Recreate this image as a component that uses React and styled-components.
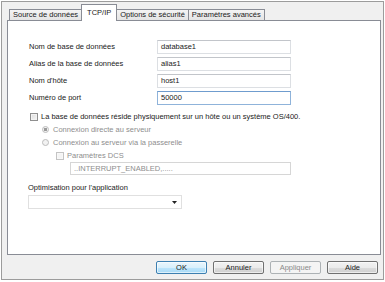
import React from 'react'
import styled, { createGlobalStyle } from 'styled-components'

const GlobalStyle = createGlobalStyle`
  html, body {
    margin: 0;
    background: #ffffff;
  }
  body {
    font-family: "Liberation Sans", Arial, sans-serif;
    font-size: 7.5px;
    color: #1a1a1a;
  }
`

const tabs = ['Source de données', 'TCP/IP', 'Options de sécurité', 'Paramètres avancés']

const fields = [
  { label: 'Nom de base de données', value: 'database1' },
  { label: 'Alias de la base de données', value: 'alias1' },
  { label: "Nom d'hôte", value: 'host1' },
  { label: 'Numéro de port', value: '50000', focused: true },
]

function App() {
  return (
    <>
      <GlobalStyle />
      <Window>
        <TabStrip>
          {tabs.map((t) => (
            <Tab key={t} $active={t === 'TCP/IP'}>{t}</Tab>
          ))}
        </TabStrip>

        <Panel>
          <FieldGrid>
            {fields.map((f) => (
              <React.Fragment key={f.label}>
                <Label>{f.label}</Label>
                <TextBox $focused={f.focused}>{f.value}</TextBox>
              </React.Fragment>
            ))}
          </FieldGrid>

          <OptionList>
            <OptionRow $indent={1}>
              <CheckBox />
              <span>La base de données réside physiquement sur un hôte ou un système OS/400.</span>
            </OptionRow>
            <OptionRow $indent={13} $disabled>
              <Radio $checked />
              <span>Connexion directe au serveur</span>
            </OptionRow>
            <OptionRow $indent={13} $disabled>
              <Radio />
              <span>Connexion au serveur via la passerelle</span>
            </OptionRow>
            <OptionRow $indent={27} $disabled>
              <CheckBox $disabled />
              <span>Paramètres DCS</span>
            </OptionRow>
            <DcsBox>..INTERRUPT_ENABLED,.....</DcsBox>
          </OptionList>

          <SectionLabel>Optimisation pour l'application</SectionLabel>
          <Select>
            <svg width="5" height="3" viewBox="0 0 5 3">
              <path d="M0 0 L5 0 L2.5 3 Z" fill="#222" />
            </svg>
          </Select>
        </Panel>

        <ButtonBar>
          <Button $variant="default">OK</Button>
          <Button>Annuler</Button>
          <Button $variant="disabled">Appliquer</Button>
          <Button>Aide</Button>
        </ButtonBar>
      </Window>
    </>
  )
}

export default App

const Window = styled.div`
  box-sizing: border-box;
  margin: 1px;
  width: 383px;
  height: 279px;
  border: 1px solid #9c9c9c;
  background: #f0f0f0;
  padding: 2px 2px 0 5px;
  display: flex;
  flex-direction: column;
`

const TabStrip = styled.div`
  display: flex;
  align-items: flex-end;
  height: 16px;
  padding-left: 2px;
`

const Tab = styled.div`
  box-sizing: border-box;
  border: 1px solid #898c95;
  border-bottom: none;
  margin-left: -1px;
  white-space: nowrap;
  color: #1a1a1a;
  ${(p) => p.$active ? `
    height: 17px;
    line-height: 16px;
    padding: 0 5px;
    background: #ffffff;
    margin-bottom: -1px;
    position: relative;
    z-index: 1;
  ` : `
    height: 11px;
    line-height: 10px;
    padding: 0 3px;
    background: linear-gradient(#f4f4f4, #e4e4e4);
  `}
  &:first-child {
    margin-left: 0;
  }
`

const Panel = styled.div`
  box-sizing: border-box;
  width: 374px;
  height: 235px;
  border: 1px solid #898c95;
  background: #ffffff;
  padding: 19px 0 0 21px;
  display: flex;
  flex-direction: column;
`

const FieldGrid = styled.div`
  display: grid;
  grid-template-columns: 128px 134px;
  grid-auto-rows: 14px;
  row-gap: 3px;
`

const Label = styled.div`
  line-height: 14px;
  white-space: nowrap;
`

const TextBox = styled.div`
  box-sizing: border-box;
  height: 14px;
  line-height: 12px;
  padding: 0 3px;
  border: 1px solid ${(p) => (p.$focused ? '#8fb3da' : '#dcdfe3')};
  border-top-color: ${(p) => (p.$focused ? '#6f9cce' : '#c2c5ca')};
  background: #ffffff;
  white-space: nowrap;
`

const OptionList = styled.div`
  display: flex;
  flex-direction: column;
  margin-top: 5px;
`

const OptionRow = styled.div`
  display: flex;
  align-items: center;
  height: 13px;
  padding-left: ${(p) => p.$indent}px;
  gap: 3px;
  white-space: nowrap;
  color: ${(p) => (p.$disabled ? '#8e8e8e' : '#1a1a1a')};
`

const CheckBox = styled.span`
  box-sizing: border-box;
  width: 8px;
  height: 8px;
  flex: none;
  border: 1px solid ${(p) => (p.$disabled ? '#c4c4c4' : '#8f8f8f')};
  background: ${(p) => (p.$disabled
    ? '#f4f4f4'
    : 'linear-gradient(135deg, #dcdcdc, #f6f6f6)')};
  box-shadow: inset 0 0 0 1px ${(p) => (p.$disabled ? '#f8f8f8' : '#f2f2f2')};
`

const Radio = styled.span`
  box-sizing: border-box;
  width: 7px;
  height: 7px;
  flex: none;
  border-radius: 50%;
  border: 1px solid #bcbcbc;
  background: ${(p) => (p.$checked
    ? 'radial-gradient(circle, #9a9a9a 0 1.4px, #f2f2f2 1.8px)'
    : '#f2f2f2')};
  margin-right: 1px;
`

const DcsBox = styled.div`
  box-sizing: border-box;
  margin-left: 41px;
  width: 221px;
  height: 13px;
  line-height: 11px;
  padding: 0 3px;
  border: 1px solid #d6d6d6;
  color: #8e8e8e;
  white-space: nowrap;
`

const SectionLabel = styled.div`
  margin-top: 6px;
  height: 13px;
  line-height: 13px;
  margin-left: -1px;
`

const Select = styled.div`
  box-sizing: border-box;
  margin: 1px 0 0 -1px;
  width: 154px;
  height: 14px;
  border: 1px solid #e0e0e0;
  background: #ffffff;
  display: flex;
  align-items: center;
  justify-content: flex-end;
  padding-right: 4px;
`

const ButtonBar = styled.div`
  display: flex;
  justify-content: flex-end;
  gap: 6px;
  margin-top: 6px;
  padding-right: 3px;
`

const Button = styled.div`
  box-sizing: border-box;
  width: 51px;
  height: 13px;
  line-height: 11px;
  text-align: center;
  border-radius: 2px;
  border: 1px solid ${(p) => p.$variant === 'default' ? '#3c7fb1'
    : p.$variant === 'disabled' ? '#adb2b5' : '#707070'};
  background: ${(p) => p.$variant === 'default'
    ? 'linear-gradient(#eaf6fd 0%, #d9f0fc 50%, #bee6fd 51%, #a7d9f5 100%)'
    : p.$variant === 'disabled'
      ? '#f4f4f4'
      : 'linear-gradient(#f2f2f2 0%, #ebebeb 50%, #dddddd 51%, #cfcfcf 100%)'};
  color: ${(p) => (p.$variant === 'disabled' ? '#8a8a8a' : '#1a1a1a')};
  box-shadow: inset 0 0 0 1px ${(p) => p.$variant === 'disabled' ? 'transparent' : 'rgba(255,255,255,0.6)'};
`
